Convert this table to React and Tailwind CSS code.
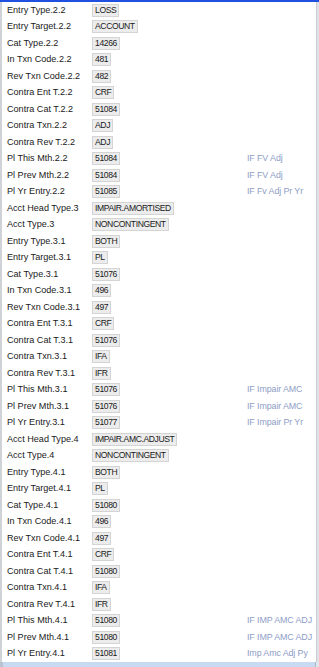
import React from "react";

const rows = [
  ["Entry Type.2.2", "LOSS"],
  ["Entry Target.2.2", "ACCOUNT"],
  ["Cat Type.2.2", "14266"],
  ["In Txn Code.2.2", "481"],
  ["Rev Txn Code.2.2", "482"],
  ["Contra Ent T.2.2", "CRF"],
  ["Contra Cat T.2.2", "51084"],
  ["Contra Txn.2.2", "ADJ"],
  ["Contra Rev T.2.2", "ADJ"],
  ["Pl This Mth.2.2", "51084", "IF FV Adj"],
  ["Pl Prev Mth.2.2", "51084", "IF FV Adj"],
  ["Pl Yr Entry.2.2", "51085", "IF Fv Adj Pr Yr"],
  ["Acct Head Type.3", "IMPAIR.AMORTISED"],
  ["Acct Type.3", "NONCONTINGENT"],
  ["Entry Type.3.1", "BOTH"],
  ["Entry Target.3.1", "PL"],
  ["Cat Type.3.1", "51076"],
  ["In Txn Code.3.1", "496"],
  ["Rev Txn Code.3.1", "497"],
  ["Contra Ent T.3.1", "CRF"],
  ["Contra Cat T.3.1", "51076"],
  ["Contra Txn.3.1", "IFA"],
  ["Contra Rev T.3.1", "IFR"],
  ["Pl This Mth.3.1", "51076", "IF Impair AMC"],
  ["Pl Prev Mth.3.1", "51076", "IF Impair AMC"],
  ["Pl Yr Entry.3.1", "51077", "IF Impair Pr Yr"],
  ["Acct Head Type.4", "IMPAIR.AMC.ADJUST"],
  ["Acct Type.4", "NONCONTINGENT"],
  ["Entry Type.4.1", "BOTH"],
  ["Entry Target.4.1", "PL"],
  ["Cat Type.4.1", "51080"],
  ["In Txn Code.4.1", "496"],
  ["Rev Txn Code.4.1", "497"],
  ["Contra Ent T.4.1", "CRF"],
  ["Contra Cat T.4.1", "51080"],
  ["Contra Txn.4.1", "IFA"],
  ["Contra Rev T.4.1", "IFR"],
  ["Pl This Mth.4.1", "51080", "IF IMP AMC ADJ"],
  ["Pl Prev Mth.4.1", "51080", "IF IMP AMC ADJ"],
  ["Pl Yr Entry.4.1", "51081", "Imp Amc Adj Py"],
];

export default function App() {
  return (
    <div className="w-[319px] h-[667px] bg-white overflow-hidden flex flex-col font-['Liberation_Sans',Arial,sans-serif] text-[#1a1a1a]">
      <div className="h-[2px] bg-[#1f50e0] shrink-0" />
      <div className="flex flex-1 min-h-0">
        <div className="w-[2px] bg-[#cfd2d6] shrink-0" />
        <div className="flex-1 flex flex-col">
          {rows.map(([label, value, note], i) => (
            <div key={i} className="h-[16.5px] grid grid-cols-[85px_155px_1fr] items-center pl-[5px]">
              <div className="whitespace-nowrap leading-none text-[9.1px]">{label}</div>
              <div className="flex">
                <span className="h-[13px] px-[2px] flex items-center border border-[#d4d4d4] bg-[#ececec] leading-none whitespace-nowrap text-[8.6px] tracking-[-0.4px]">
                  {value}
                </span>
              </div>
              <div className="whitespace-nowrap leading-none text-[8.9px] tracking-[-0.1px] text-[#8e9dc6]">{note || ""}</div>
            </div>
          ))}
        </div>
        <div className="w-[3px] bg-[#dfe2e6] border-l border-[#c9cdd2] shrink-0" />
      </div>
      <div className="h-[5px] shrink-0 flex">
        <div className="w-[3px] bg-[#b9c3cf]" />
        <div className="flex-1 bg-[#c8daf1]" />
        <div className="w-[4px] bg-[#dfe6ee] border-l border-[#aab8c8]" />
      </div>
    </div>
  );
}
